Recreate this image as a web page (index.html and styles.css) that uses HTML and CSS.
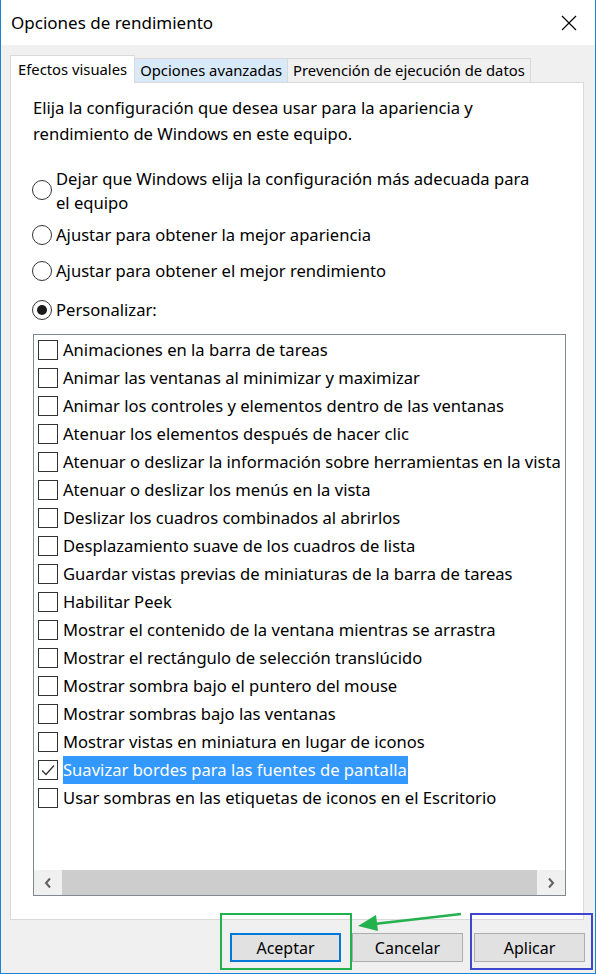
FILE: index.html
```html
<!DOCTYPE html>
<html lang="es">
<head>
  <meta charset="UTF-8">
  <title>Opciones de rendimiento</title>
  <link rel="stylesheet" href="styles.css">
</head>
<body>
  <div class="window">
    <div class="titlebar">
      <span class="title">Opciones de rendimiento</span>
      <svg class="close" width="16" height="16" viewBox="0 0 16 16">
        <path d="M1 1 L15 15 M15 1 L1 15" stroke="#000" stroke-width="1.2" fill="none"/>
      </svg>
    </div>

    <div class="body">
      <div class="tabs">
        <div class="tab active">Efectos visuales</div>
        <div class="tab hover">Opciones avanzadas</div>
        <div class="tab">Prevención de ejecución de datos</div>
      </div>

      <div class="panel">
        <p class="intro">Elija la configuración que desea usar para la apariencia y rendimiento de Windows en este equipo.</p>

        <div class="radios">
          <label class="radio r1"><span class="dot"></span><span class="text">Dejar que Windows elija la configuración más adecuada para el equipo</span></label>
          <label class="radio r2"><span class="dot"></span><span class="text">Ajustar para obtener la mejor apariencia</span></label>
          <label class="radio r3"><span class="dot"></span><span class="text">Ajustar para obtener el mejor rendimiento</span></label>
          <label class="radio r4 checked"><span class="dot"></span><span class="text">Personalizar:</span></label>
        </div>

        <div class="listbox">
          <div class="items">
            <div class="item"><span class="box"></span><span class="label">Animaciones en la barra de tareas</span></div>
            <div class="item"><span class="box"></span><span class="label">Animar las ventanas al minimizar y maximizar</span></div>
            <div class="item"><span class="box"></span><span class="label">Animar los controles y elementos dentro de las ventanas</span></div>
            <div class="item"><span class="box"></span><span class="label">Atenuar los elementos después de hacer clic</span></div>
            <div class="item"><span class="box"></span><span class="label">Atenuar o deslizar la información sobre herramientas en la vista</span></div>
            <div class="item"><span class="box"></span><span class="label">Atenuar o deslizar los menús en la vista</span></div>
            <div class="item"><span class="box"></span><span class="label">Deslizar los cuadros combinados al abrirlos</span></div>
            <div class="item"><span class="box"></span><span class="label">Desplazamiento suave de los cuadros de lista</span></div>
            <div class="item"><span class="box"></span><span class="label">Guardar vistas previas de miniaturas de la barra de tareas</span></div>
            <div class="item"><span class="box"></span><span class="label">Habilitar Peek</span></div>
            <div class="item"><span class="box"></span><span class="label">Mostrar el contenido de la ventana mientras se arrastra</span></div>
            <div class="item"><span class="box"></span><span class="label">Mostrar el rectángulo de selección translúcido</span></div>
            <div class="item"><span class="box"></span><span class="label">Mostrar sombra bajo el puntero del mouse</span></div>
            <div class="item"><span class="box"></span><span class="label">Mostrar sombras bajo las ventanas</span></div>
            <div class="item"><span class="box"></span><span class="label">Mostrar vistas en miniatura en lugar de iconos</span></div>
            <div class="item selected">
              <span class="box">
                <svg width="18" height="18" viewBox="0 0 18 18"><path d="M3 9.5 L7 13.5 L15 4.5" stroke="#333" stroke-width="1.3" fill="none"/></svg>
              </span>
              <span class="label">Suavizar bordes para las fuentes de pantalla</span>
            </div>
            <div class="item"><span class="box"></span><span class="label">Usar sombras en las etiquetas de iconos en el Escritorio</span></div>
          </div>

          <div class="hscroll">
            <span class="arrow">
              <svg width="10" height="12" viewBox="0 0 10 12"><path d="M7 1.5 L3 6 L7 10.5" stroke="#606060" stroke-width="2" fill="none"/></svg>
            </span>
            <span class="thumb"></span>
            <span class="arrow">
              <svg width="10" height="12" viewBox="0 0 10 12"><path d="M3 1.5 L7 6 L3 10.5" stroke="#606060" stroke-width="2" fill="none"/></svg>
            </span>
          </div>
        </div>
      </div>

      <div class="footer">
        <button class="btn default">Aceptar</button>
        <button class="btn">Cancelar</button>
        <button class="btn">Aplicar</button>
      </div>
    </div>

    <!-- marcas de anotación -->
    <div class="mark mark-green"></div>
    <div class="mark mark-blue"></div>
    <svg class="mark-arrow" width="110" height="24" viewBox="0 0 110 24">
      <path d="M105 2 L18 12" stroke="#22b14c" stroke-width="2.5" fill="none"/>
      <path d="M2 14 L20 3 L22 19 Z" fill="#22b14c"/>
    </svg>
  </div>
</body>
</html>
```

FILE: styles.css
```css
* {
  box-sizing: border-box;
}

body {
  margin: 0;
  font-family: 'Noto Sans', 'Open Sans', sans-serif;
  font-size: 16.6px;
  color: #000;
}

.window {
  position: relative;
  width: 596px;
  height: 974px;
  border: 1px solid #1883d7;
  border-top: none;
  background-color: #f0f0f0;
  display: flex;
  flex-direction: column;
}

.titlebar {
  height: 45px;
  background-color: #fff;
  display: flex;
  align-items: center;
  justify-content: space-between;
  padding: 0 18px 0 10px;
}

.title {
  font-size: 17px;
  margin-top: -1px;
}

.body {
  flex: 1;
  padding: 10px 10px 0 9px;
  display: flex;
  flex-direction: column;
}

.tabs {
  display: flex;
  align-items: flex-end;
  height: 27px;
  font-size: 14.8px;
}

.tab {
  height: 24px;
  line-height: 22px;
  padding: 0 5px;
  border: 1px solid #d9d9d9;
  border-bottom: none;
  background-color: #f0f0f0;
  white-space: nowrap;
}

.tab.active {
  height: 28px;
  line-height: 26px;
  padding: 0 7px;
  background-color: #fff;
  position: relative;
  z-index: 1;
  margin-bottom: -1px;
}

.tab.hover {
  background-color: #d8eaf9;
  border-left: none;
}

.tab + .tab:not(.hover) {
  border-left: none;
}

.panel {
  height: 838px;
  margin-right: 1px;
  background-color: #fff;
  border: 1px solid #d9d9d9;
  padding: 12px 18px 0 22px;
}

.intro {
  margin: 0;
  max-width: 470px;
  line-height: 26px;
}

.radios {
  margin-top: 20px;
  display: flex;
  flex-direction: column;
}

.radio {
  display: flex;
  align-items: flex-start;
  line-height: 24px;
  margin-left: -1px;
}

.radio .text {
  max-width: 485px;
}

.r2 {
  margin-top: 8px;
}

.r3 {
  margin-top: 12px;
}

.r4 {
  margin-top: 15px;
}

.radio .dot {
  flex: none;
  width: 20px;
  height: 20px;
  margin-top: 2px;
  margin-right: 4px;
  border: 1px solid #333;
  border-radius: 50%;
  position: relative;
  background-color: #fff;
}

.r1 .dot {
  margin-top: 13px;
}

.radio.checked .dot::after {
  content: '';
  position: absolute;
  left: 4px;
  top: 4px;
  width: 10px;
  height: 10px;
  border-radius: 50%;
  background-color: #1a1a1a;
}

.listbox {
  margin-top: 12px;
  width: 533px;
  height: 562px;
  border: 1px solid #828790;
  display: flex;
  flex-direction: column;
}

.items {
  flex: 1;
  padding-top: 1px;
  overflow: hidden;
}

.item {
  height: 28px;
  display: flex;
  align-items: center;
  padding-left: 4px;
  white-space: nowrap;
}

.item .box {
  flex: none;
  width: 20px;
  height: 20px;
  border: 1px solid #333;
  background-color: #fff;
  display: flex;
  align-items: center;
  justify-content: center;
  margin-right: 5px;
}

.item .label {
  height: 28px;
  line-height: 28px;
  padding-right: 1px;
}

.item.selected .label {
  background-color: #3399ff;
  color: #fff;
}

.hscroll {
  height: 25px;
  display: flex;
  background-color: #f0f0f0;
}

.hscroll .arrow {
  width: 28px;
  display: flex;
  align-items: center;
  justify-content: center;
}

.hscroll .thumb {
  flex: 1;
  background-color: #cdcdcd;
}

.footer {
  display: flex;
  justify-content: flex-end;
  gap: 11px;
  padding-top: 13px;
}

.btn {
  width: 111px;
  height: 29px;
  font-family: inherit;
  font-size: 16px;
  color: #000;
  background-color: #e1e1e1;
  border: 1px solid #adadad;
  padding: 0;
}

.btn.default {
  border: 2px solid #0078d7;
}

.mark {
  position: absolute;
  border: 2px solid;
}

.mark-green {
  left: 219px;
  top: 913px;
  width: 132px;
  height: 57px;
  border-color: #22b14c;
}

.mark-blue {
  left: 469px;
  top: 913px;
  width: 123px;
  height: 57px;
  border-color: #3f48cc;
}

.mark-arrow {
  position: absolute;
  left: 355px;
  top: 912px;
}
```
